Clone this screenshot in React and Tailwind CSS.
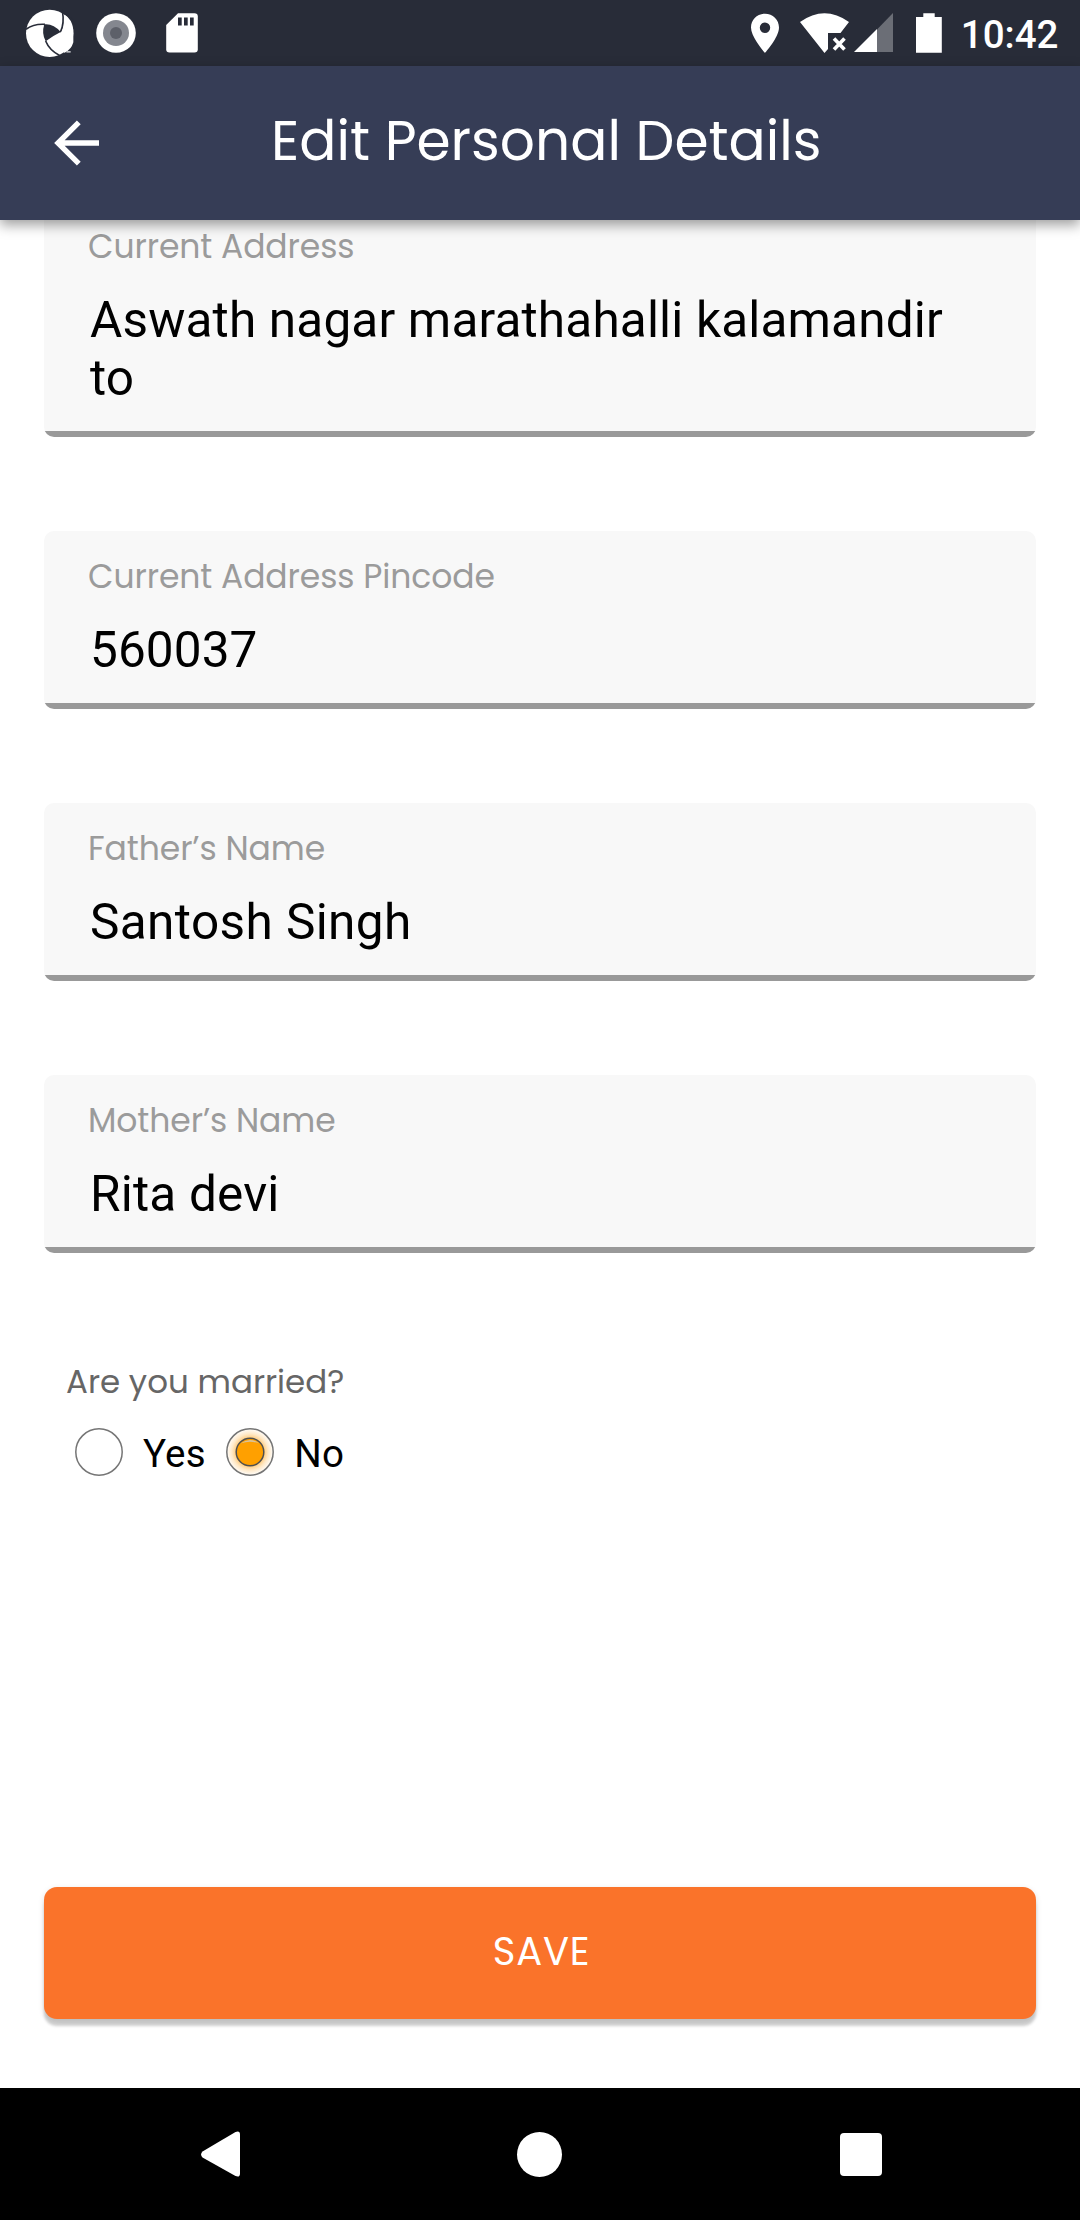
import React from "react";

const fields = [
  { label: "Current Address", value: "Aswath nagar marathahalli kalamandir to", tracking: "tracking-[0.160px]" },
  { label: "Current Address Pincode", value: "560037", tracking: "tracking-[0.100px]" },
  { label: "Father’s Name", value: "Santosh Singh", tracking: "tracking-[0.400px]" },
  { label: "Mother’s Name", value: "Rita devi", tracking: "tracking-[0.200px]" },
];

function StatusBar() {
  return (
    <div className="flex h-[66px] shrink-0 items-center bg-[#282c38] text-white">
      <svg className="ml-[26px]" width="48" height="48" viewBox="0 0 144 144">
        <circle cx="71" cy="73" r="71" fill="#fff" />
        <path d="M55 46Q82 43 104 69Q78 82 59 97Q46 73 55 46Z" fill="#282c38" />
        <g fill="none" stroke="#282c38" strokeWidth="5">
          <path d="M0 61Q22 44 57 46" />
          <path d="M103 70Q116 44 109 4" />
          <path d="M59 96Q70 124 102 140" />
        </g>
        <path d="M109 -2L150 -2L150 40Q136 22 116 16L109 12Z" fill="#282c38" />
        <path d="M116 17Q138 30 142 62L142 100Q136 122 116 131Q86 122 64 99Q92 80 107 68Q119 46 116 17Z" fill="#fff" />
        <path d="M121 126h13v5h-13z" fill="#b9bbc0" />
      </svg>
      <svg className="ml-[22px]" width="40" height="40" viewBox="0 0 40 40">
        <circle cx="20" cy="20" r="19.8" fill="#fff" />
        <circle cx="20" cy="20" r="13" fill="#84878f" />
        <circle cx="20" cy="20" r="6" fill="#5d6069" />
      </svg>
      <svg className="ml-[30px]" width="32" height="40" viewBox="0 0 32 40">
        <path d="M12 .3H28.500Q31.800 .3 31.800 3.500V36.300Q31.800 39.600 28.500 39.600H3.500Q.2 39.600 .2 36.300V12Z" fill="#fff" />
        <path d="M12 4.500h3.700v8H12zM18 4.500h3.700v8H18zM24 4.500h3.700v8H24z" fill="#282c38" />
      </svg>
      <svg className="ml-auto" width="28" height="40" viewBox="0 0 28 40">
        <path fillRule="evenodd" d="M14 .8C6.200 .8 0 6.800 0 14.600C0 24.500 14 40 14 40S28 24.500 28 14.600C28 6.800 21.800 .8 14 .8ZM14 9.500A5.200 5.200 0 1 1 14 19.900A5.200 5.200 0 1 1 14 9.500Z" fill="#fff" />
      </svg>
      <svg className="ml-[20px]" width="51" height="40" viewBox="0 0 51 40">
        <path d="M1 9Q25.500 -8.500 50 9L41.500 20H29V36L25.500 40Z" fill="#fff" />
        <path d="M35 25.500L45.500 36.500M45.500 25.500L35 36.500" stroke="#fff" strokeWidth="3.600" />
      </svg>
      <svg className="ml-[4px]" width="40" height="40" viewBox="0 0 40 40">
        <path d="M23 16.500L39 0V39H23Z" fill="#6b6e76" />
        <path d="M0 39L23 16V39Z" fill="#fff" />
      </svg>
      <svg className="ml-[22px]" width="26" height="40" viewBox="0 0 26 40">
        <path d="M7.300 .2H18.700V4H25.800V39.800H0V4H7.300Z" fill="#fff" />
      </svg>
      <div className="ml-[19px] mr-[21.500px] mt-[3px] text-[38.500px] leading-[46px] font-medium font-['Roboto',sans-serif]">10:42</div>
    </div>
  );
}

function Header() {
  return (
    <header className="relative z-10 flex h-[154px] shrink-0 items-center bg-[#363d56] text-white shadow-[0_5px_12px_rgba(0,0,0,0.38)]">
      <svg className="ml-[54px]" width="46" height="46" viewBox="0 0 46 46">
        <path d="M24.800 2.300L4 23L24.800 43.700M4 23H45" fill="none" stroke="#fff" strokeWidth="5.400" />
      </svg>
      <h1 className="ml-[171px] whitespace-nowrap pb-[4px] text-[55px] leading-[62px]">Edit Personal Details</h1>
    </header>
  );
}

function Field({ label, value, tracking }) {
  return (
    <div className="shrink-0 overflow-hidden rounded-[10px] bg-[#f8f8f8]">
      <div className="px-[44px] pt-[26px]">
        <label className="block text-[33px] leading-[40px] tracking-[-0.080px] text-[#9b9b9b]">{label}</label>
        <p className={"mt-[24px] pb-[24px] pl-[2px] text-[49.500px] leading-[58px] text-black font-['Roboto',sans-serif] " + tracking}>{value}</p>
      </div>
      <div className="h-[6px] bg-[#999999]" />
    </div>
  );
}

function Radio({ label, checked }) {
  return (
    <div className="flex h-[48px] items-center">
      <svg width="48" height="48" viewBox="0 0 48 48">
        {checked && (
          <defs>
            <radialGradient id="glow">
              <stop offset="0.6" stopColor="#ffcd80" />
              <stop offset="0.78" stopColor="#ffe9c8" />
              <stop offset="1" stopColor="#fffdfa" />
            </radialGradient>
          </defs>
        )}
        <circle cx="24" cy="24" r="23.2" fill={checked ? "url(#glow)" : "#fff"} stroke="#757575" strokeWidth="1.500" />
        {checked && <circle cx="24" cy="24" r="13.800" fill="#ffa000" stroke="#4f4f4f" strokeWidth="1.500" />}
        {checked && <path d="M14.500 15.500Q24 8.500 33.500 15.500Q24 12 14.500 15.500Z" fill="#d9c29a" />}
      </svg>
      <span className="ml-[20px] pt-[4px] text-[38.500px] leading-[44px] tracking-[0.200px] text-black font-['Roboto',sans-serif]">{label}</span>
    </div>
  );
}

function NavBar() {
  return (
    <nav className="flex h-[132px] shrink-0 items-center bg-black">
      <svg className="ml-[201px]" width="39" height="46" viewBox="0 0 39 46">
        <path d="M1.500 20.500L34.500 .9Q39 -.8 39 3.500V42.500Q39 46.800 34.500 45.100L1.500 26.500Q-1.300 23.500 1.500 20.500Z" fill="#fff" />
      </svg>
      <div className="ml-[277px] size-[45px] rounded-full bg-white" />
      <div className="ml-[277.500px] h-[43px] w-[42px] rounded-[4px] bg-white" />
    </nav>
  );
}

export default function App() {
  return (
    <div className="flex h-[2220px] w-[1080px] flex-col overflow-hidden bg-white font-['Poppins','Inter',sans-serif]">
      <StatusBar />
      <Header />
      <main className="flex min-h-0 flex-1 flex-col overflow-hidden px-[44px]">
        <div className="-mt-[19px] flex flex-col gap-[94px]">
          {fields.map((field) => (
            <Field key={field.label} {...field} />
          ))}
        </div>
        <div className="mt-[109px] pl-[22px]">
          <p className="text-[32.500px] leading-[40px] text-[#666666]">Are you married?</p>
          <div className="mt-[26px] flex gap-[20.500px] pl-[9px]">
            <Radio label="Yes" />
            <Radio label="No" checked />
          </div>
        </div>
        <button className="mb-[69px] mt-auto h-[132px] shrink-0 rounded-[13px] bg-[#fa732a] pb-[3px] pl-[3px] text-[38.500px] tracking-[0.800px] text-white shadow-[0_7px_3px_rgba(0,0,0,0.18),0_2px_6px_rgba(0,0,0,0.12)]">
          SAVE
        </button>
      </main>
      <NavBar />
    </div>
  );
}
